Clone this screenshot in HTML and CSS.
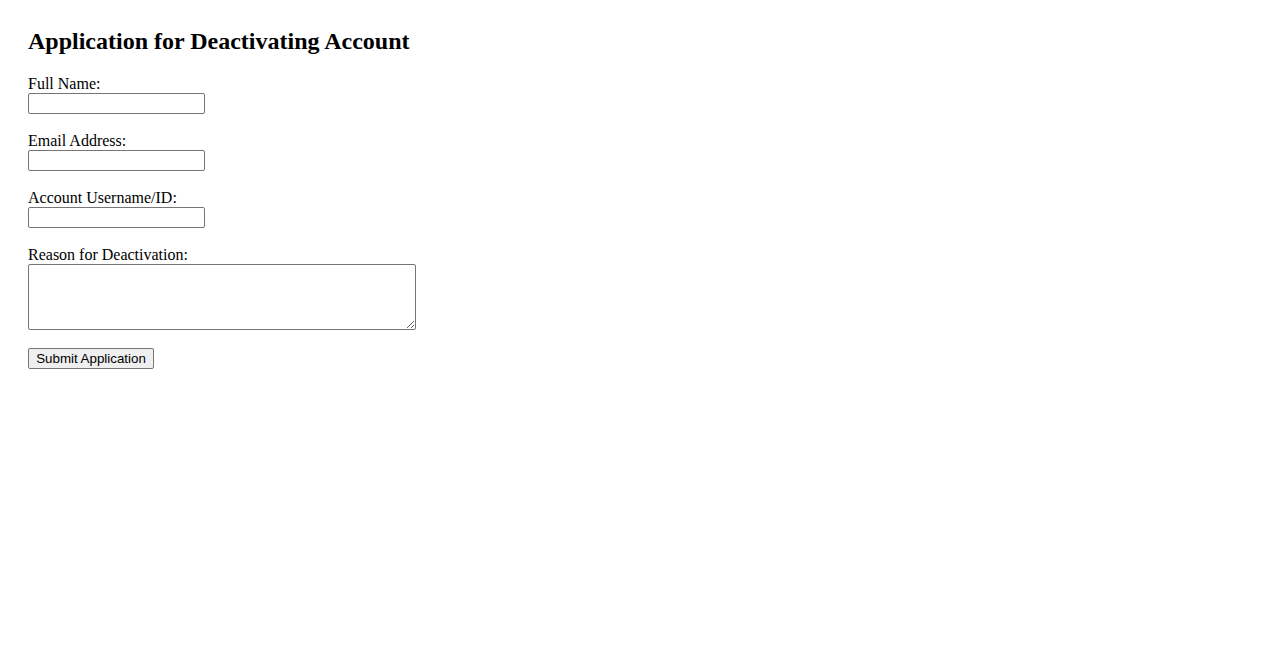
FILE: index.html
```html
<!DOCTYPE html>
<html lang="en">
<head>
    <meta charset="UTF-8">
    <meta name="viewport" content="width=device-width, initial-scale=1.0">
    <title>Application for Deactivating Account</title>
    <link rel="stylesheet" href="styles.css">
</head>
<body>

    <h2>Application for Deactivating Account</h2>

    <form class="deactivate-form">
        <div class="field">
            <label for="full_name">Full Name:</label>
            <input type="text" id="full_name" name="full_name">
        </div>

        <div class="field">
            <label for="email">Email Address:</label>
            <input type="email" id="email" name="email">
        </div>

        <div class="field">
            <label for="username">Account Username/ID:</label>
            <input type="text" id="username" name="username">
        </div>

        <div class="field">
            <label for="reason">Reason for Deactivation:</label>
            <textarea id="reason" name="reason" rows="4" cols="50"></textarea>
        </div>

        <button type="submit">Submit Application</button>
    </form>

</body>
</html>
```

FILE: styles.css
```css
body {
    margin: 0;
    padding: 28px;
    font-family: 'Liberation Serif', 'Times New Roman', serif;
    font-size: 16px;
    color: #000;
    background: #fff;
}

h2 {
    margin: 0 0 20px;
    font-size: 24px;
    font-weight: bold;
}

.field {
    margin-bottom: 18px;
}

label {
    display: block;
}

input, textarea, button {
    display: block;
    margin: 0;
    font-family: 'Liberation Sans', Arial, sans-serif;
    font-size: 13.33px;
    box-sizing: border-box;
}

input {
    width: 177px;
    height: 21px;
    padding: 1px 2px;
    border: 1px solid #767676;
    border-radius: 2px;
}

textarea {
    width: 388px;
    height: 66px;
    padding: 2px;
    border: 1px solid #767676;
    border-radius: 2px;
    font-family: 'Liberation Mono', monospace;
}

button {
    width: 126px;
    height: 21px;
    padding: 1px 6px;
    color: #000;
    background: #efefef;
    border: 1px solid #767676;
    border-radius: 2px;
}
```
